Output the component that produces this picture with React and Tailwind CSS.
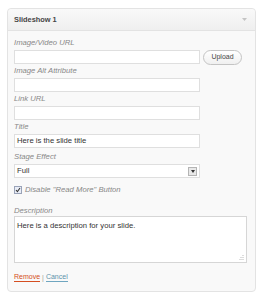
import React from "react";

const Field = ({ label, value = "", children }) => (
	<div className="flex flex-col">
		<label className="flex h-[14px] items-center text-[7.7px] italic text-[#888]">{label}</label>
		<div className="flex h-[14px] items-center gap-[3px]">
			<div className="flex h-[14px] w-[186px] items-center border border-[#dfdfdf] bg-white px-[2px] text-[7.7px] text-[#333]">
				{value}
			</div>
			{children}
		</div>
	</div>
);

const App = () => {
	return (
		<div className="h-[300px] w-[265px] bg-white pl-[7px] pt-[8px] font-['Liberation_Sans',Arial,sans-serif]">
			<div className="h-[284px] w-[249px] rounded-[4px] border border-[#e3e3e3] bg-[#f9f9f9]">
				<div className="flex h-[22px] items-center justify-between rounded-t-[4px] border-b border-[#e3e3e3] bg-gradient-to-b from-[#f9f9f9] to-[#efefef] pl-[6px] pr-[8px]">
					<span className="text-[7.4px] font-bold text-[#464646]">Slideshow 1</span>
					<svg width="5" height="3" viewBox="0 0 5 3">
						<path d="M0 0h5L2.5 3z" fill="#c4c4c4" />
					</svg>
				</div>
				<div className="flex flex-col px-[6px] pt-[5px]">
					<Field label="Image/Video URL">
						<button className="h-[15px] w-[39px] rounded-[8px] border border-[#c4c4c4] bg-gradient-to-b from-white to-[#f0f0f0] text-[7px] text-[#464646]">
							Upload
						</button>
					</Field>
					<Field label="Image Alt Attribute" />
					<Field label="Link URL" />
					<Field label="Title" value="Here is the slide title" />
					<div className="mt-[1px] flex flex-col">
						<label className="flex h-[15px] items-center text-[7.7px] italic text-[#888]">Stage Effect</label>
						<div className="flex h-[14px] w-[186px] items-center justify-between border border-[#dfdfdf] bg-white pl-[2px] pr-[2px] text-[7.7px] text-[#333]">
							<span>Full</span>
							<span className="flex h-[9px] w-[9px] items-center justify-center border border-[#b4b4b4] bg-[#e8e8e8]">
								<svg width="4" height="3" viewBox="0 0 4 3">
									<path d="M0 0h4L2 3z" fill="#333" />
								</svg>
							</span>
						</div>
					</div>
					<div className="mt-[7px] flex h-[10px] items-center gap-[3px]">
						<span className="flex h-[8px] w-[8px] items-center justify-center border border-[#9aa3b8] bg-[#e9edf7]">
							<svg width="6" height="6" viewBox="0 0 6 6">
								<path d="M1 3l1.4 1.7L5 1" stroke="#333" strokeWidth="1.1" fill="none" />
							</svg>
						</span>
						<span className="text-[7.7px] italic text-[#888]">Disable "Read More" Button</span>
					</div>
					<div className="mt-[10px] flex flex-col">
						<label className="flex h-[11px] items-center text-[7.7px] italic text-[#888]">Description</label>
						<div className="relative h-[47px] w-[233px] border border-[#d6d6d6] bg-white px-[2px] pt-[4px] text-[7.7px] leading-[10px] text-[#333]">
							Here is a description for your slide.
							<svg className="absolute right-[2px] bottom-[2px]" width="5" height="5" viewBox="0 0 5 5">
								<path d="M4 0v1M2 2v1M4 2v1M0 4v1M2 4v1M4 4v1" stroke="#bbb" />
							</svg>
						</div>
					</div>
					<div className="mt-[9px] flex items-center gap-[2px] text-[7px] leading-[9px]">
						<span className="border-b border-[#d54e21] text-[#d54e21]">Remove</span>
						<span className="text-[#999]">|</span>
						<span className="border-b border-[#6fa6c0] text-[#5d93ac]">Cancel</span>
					</div>
				</div>
			</div>
		</div>
	);
};

export default App;
